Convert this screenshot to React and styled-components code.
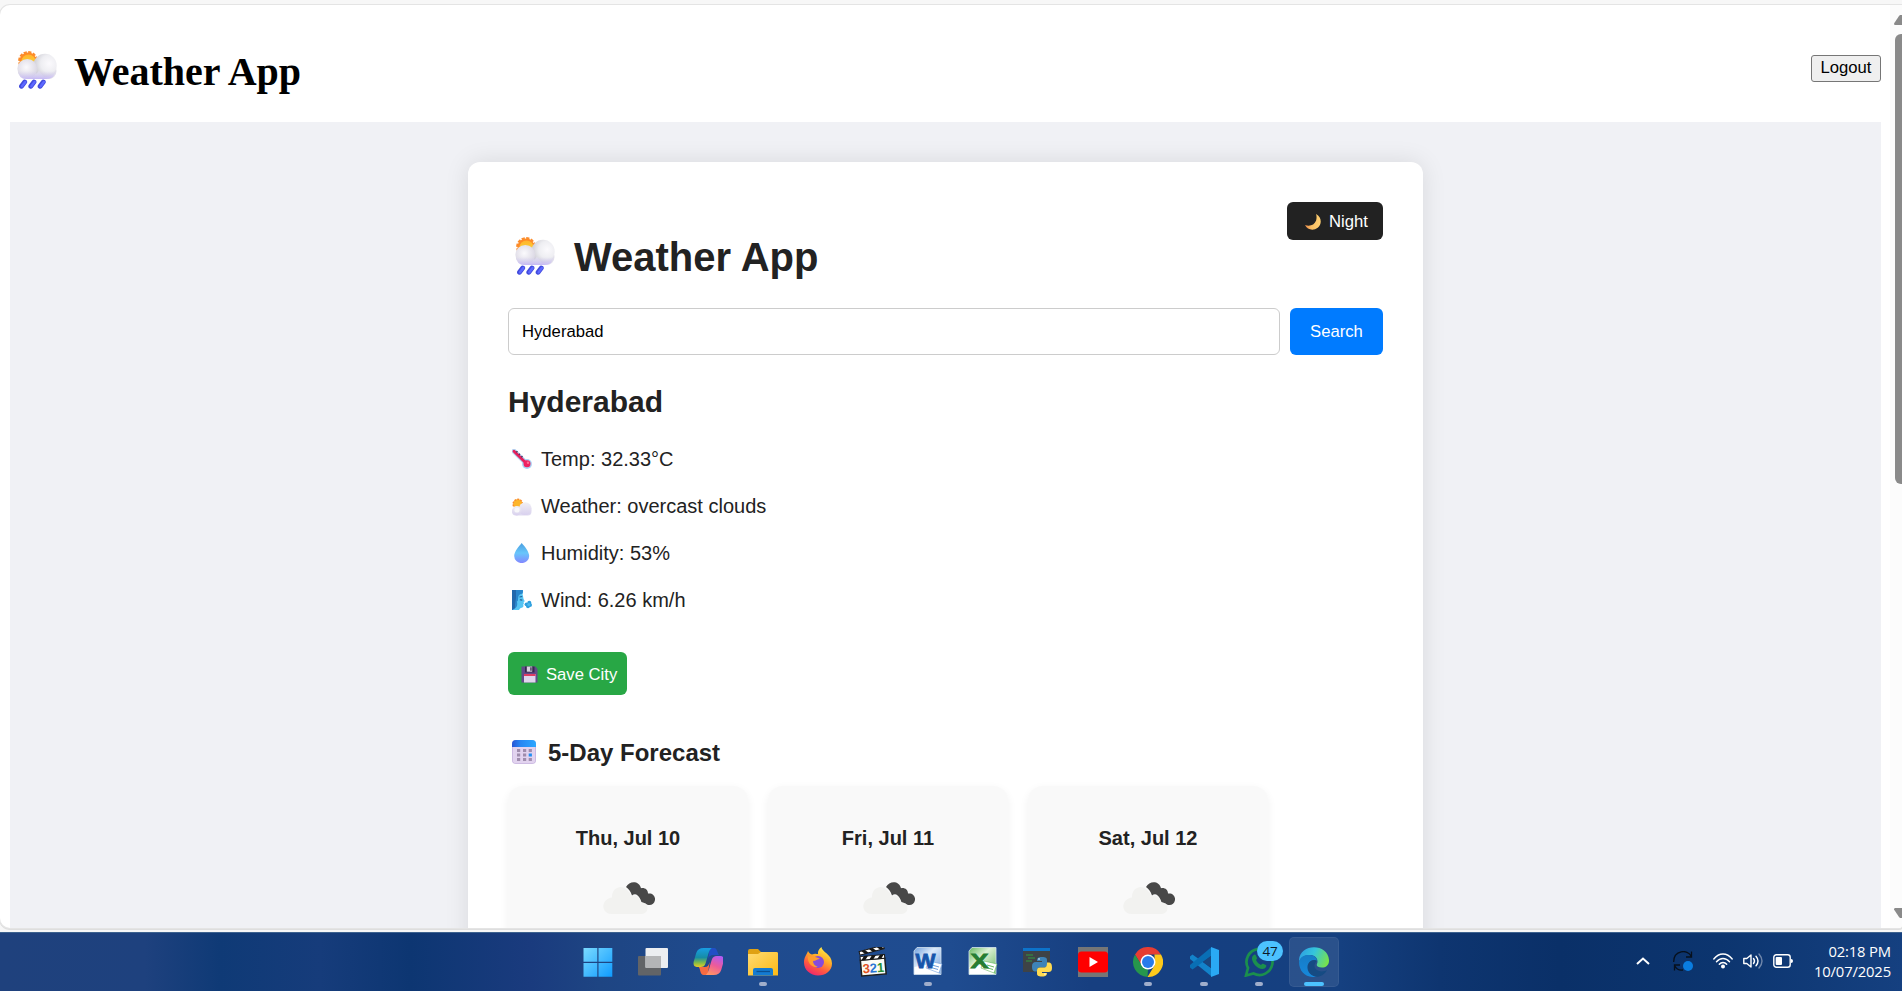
import React from "react";
import styled, { createGlobalStyle } from "styled-components";

const Global = createGlobalStyle`
  *, *::before, *::after { box-sizing: border-box; }
  html, body { margin: 0; padding: 0; overflow: hidden; background: #f7f7f7; }
  button, input { margin: 0; }
  svg { display: block; flex: none; }
`;
const sans = `"Liberation Sans", Arial, sans-serif`;

const Desktop = styled.div`
  width: 1902px; height: 991px; display: flex; flex-direction: column;
  padding-top: 5px; overflow: hidden; background: #f7f7f7;
`;
const BrowserWindow = styled.div`
  display: flex; height: 923px; flex: none; overflow: hidden; background: #fff;
  border-radius: 10px 0 3px 10px;
  box-shadow: 0 0 0 1px #e4e4e4, 0 1px 0 1px #dedede;
`;
const Page = styled.main`flex: 1; padding: 10px 9px 0 10px; overflow: hidden;`;
const Nav = styled.header`
  height: 107px; display: flex; align-items: center; justify-content: space-between;
`;
const Brand = styled.div`
  display: flex; align-items: center; gap: 17px; padding-left: 7px; padding-top: 3px;
`;
const BrandTitle = styled.h1`
  margin: 4px 0 0; font: bold 40px/46px "Liberation Serif", "Times New Roman", serif; color: #000;
`;
const Logout = styled.button`
  width: 70px; height: 27px; padding: 0 0 2px; border: 1px solid #767676; border-radius: 3px;
  background: #efefef; color: #000; font: 16.67px/19px ${sans};
`;
const Backdrop = styled.div`
  height: 900px; display: flex; justify-content: center; align-items: flex-start;
  padding-top: 40px; background: #f0f1f5; overflow: hidden;
`;
const Card = styled.section`
  width: 955px; height: 1200px; flex: none; padding: 40px; background: #fff; border-radius: 12px;
  box-shadow: 0 0 25px rgba(0, 0, 0, 0.1); color: #222; font-family: ${sans};
`;
const CardHead = styled.div`
  display: flex; justify-content: space-between; align-items: flex-start; height: 106px;
`;
const CardBrand = styled.div`
  display: flex; align-items: flex-start; gap: 19px; padding: 32px 0 0 7px;
  svg { margin-top: 3px; }
`;
const CardTitle = styled.h1`margin: 0; font-size: 40px; line-height: 46px;`;
const NightButton = styled.button`
  display: flex; align-items: center; gap: 8px; width: 96px; height: 38px; padding: 2px 0 0 18px;
  border: 0; border-radius: 6px; background: #222; color: #fff; font: 16.67px/20px ${sans};
`;
const SearchRow = styled.div`display: flex; gap: 10px; height: 47px;`;
const SearchInput = styled.input`
  flex: 1; border: 1px solid #ccc; border-radius: 6px; padding: 0 13px; background: #fff;
  color: #000; outline: 0; font: 16.67px/20px ${sans};
`;
const SearchButton = styled.button`
  width: 93px; border: 0; border-radius: 6px; background: #007bff; color: #fff; font: 16.67px/20px ${sans};
`;
const City = styled.h2`margin: 30px 0 17px; font-size: 30px; line-height: 34px;`;
const Reading = styled.div`
  display: flex; align-items: center; height: 47px; gap: 9px; padding: 0 0 1px 4px;
  font-size: 20px; line-height: 46px;
`;
const SaveButton = styled.button`
  display: flex; align-items: center; gap: 8px; margin-top: 28px; width: 119px; height: 43px;
  padding: 2px 0 0 13px; border: 0; border-radius: 6px; background: #28a745; color: #fff;
  font: 16.67px/20px ${sans}; white-space: nowrap;
`;
const ForecastTitle = styled.h3`
  display: flex; align-items: center; gap: 12px; margin: 44px 0 19px; padding-left: 4px;
  font-size: 24px; line-height: 28px;
  svg { margin-bottom: 2px; }
`;
const Days = styled.div`display: flex; gap: 20px;`;
const Day = styled.article`
  width: 240px; height: 300px; padding-top: 40px; display: flex; flex-direction: column;
  align-items: center; gap: 32px; border-radius: 15px; background: #f9f9f9;
  box-shadow: 0 3px 10px rgba(0, 0, 0, 0.06);
  svg { margin-left: 2px; }
`;
const DayName = styled.strong`font-size: 20px; line-height: 24px;`;

const Scrollbar = styled.div`
  width: 12px; height: 923px; background: #fcfcfc; display: flex; flex-direction: column;
  align-items: flex-start; padding: 10px 0 10px 4px; overflow: hidden;
`;
const Thumb = styled.div`
  width: 12px; height: 450px; margin: 9px 0 auto 1px; border-radius: 6px; background: #8a8a8a; flex: none;
`;

const Taskbar = styled.footer`
  margin-top: 4px; height: 59px; display: flex; align-items: stretch; border-top: 1px solid #3d628f;
  background: linear-gradient(90deg, #1f417d 0, #1e417e 145px, #0f3a76 220px, #163c7b 320px,
    #0d3672 410px, #1a3b7e 530px, #1e4583 600px, #1f4b8e 720px, #1f4c90 950px, #173f80 1090px,
    #153f80 1200px, #154080 1340px, #0e3570 1440px, #0a3068 1560px, #0c356f 1720px, #154080 1902px);
`;
const Apps = styled.div`display: flex; padding-left: 570px; flex: none;`;
const Slot = styled.div`
  position: relative; width: 55.1px; display: flex; flex-direction: column; align-items: center;
  padding-top: 14px;
`;
const Glyph = styled.div`position: relative;`;
const ActiveTile = styled.div`
  position: absolute; left: 2.5px; top: 4px; width: 50px; height: 50px; border-radius: 5px;
  background: rgba(255, 255, 255, 0.09); border: 1px solid rgba(255, 255, 255, 0.06);
`;
const Running = styled.span`
  width: ${(p) => (p.$active ? 20 : 8)}px; height: 4px; margin-top: 5px; border-radius: 2px;
  background: ${(p) => (p.$active ? "#4cc2ff" : "#a0aecb")}; position: relative;
`;
const Badge = styled.span`
  position: absolute; left: 26px; top: 8px; width: 26px; height: 20px; border-radius: 10px;
  background: #4cc2ff; color: #0b1a2a; text-align: center;
  font: 13.5px/20px "Open Sans", "Noto Sans", sans-serif;
`;
const Tray = styled.div`
  flex: 1; display: flex; align-items: center; justify-content: flex-end; padding: 0 11px 3px 0;
`;
const TrayIcon = styled.span`margin-right: ${(p) => p.$gap}px;`;
const Clock = styled.div`
  width: 78px; padding-top: 1px; text-align: right; color: #fff; white-space: nowrap;
  font: 14.8px/20px "Open Sans", "Noto Sans", sans-serif; letter-spacing: -0.15px;
`;

const RainCloud = ({ id }) => (
  <svg width="40" height="38" viewBox="0 0 40 38">
    <defs>
      <radialGradient id={id + "a"} cx=".68" cy=".42" r=".72"><stop offset="0" stopColor="#fbfafd" /><stop offset=".5" stopColor="#eeeef2" /><stop offset="1" stopColor="#c9c8d0" /></radialGradient>
      <radialGradient id={id + "b"} cx=".45" cy=".42" r=".6"><stop offset="0" stopColor="#fbfafd" /><stop offset="1" stopColor="#d9d6e2" /></radialGradient>
      <linearGradient id={id + "c"} x1="0" y1="0" x2="0" y2="1"><stop offset=".2" stopColor="#d5cff0" stopOpacity="0" /><stop offset="1" stopColor="#c6b9f5" /></linearGradient>
      <linearGradient id={id + "s"} x1="0" y1="0" x2="0" y2="1"><stop offset="0" stopColor="#ffb42d" /><stop offset=".7" stopColor="#fbd236" /></linearGradient>
    </defs>
    <circle cx="11" cy="10" r="8.5" fill="#ff8a24" />
    <circle cx="11" cy="10" r="8.800" fill="none" stroke="#fb8c2c" strokeWidth="2.200" strokeDasharray="3.200 1.400" strokeLinejoin="round" />
    <circle cx="11.500" cy="10.500" r="7" fill={`url(#${id}s)`} />
    <rect x="1" y="12" width="38.500" height="16" rx="8" fill="#e3e1eb" />
    <circle cx="28" cy="14.500" r="11.700" fill={`url(#${id}a)`} />
    <circle cx="10.300" cy="17.800" r="9.900" fill={`url(#${id}b)`} />
    <path d="M10 27.500q8-1 12-8l6 8Z" fill="#e0deea" />
    <path d="M.6 18H39.400q-1.400 10-10.400 10H10Q1 28 .6 18Z" fill={`url(#${id}c)`} />
    <g stroke="#424bdc" strokeWidth="4.800" strokeLinecap="round"><path d="M7.700 31 4.500 35.300M17 31l-3.200 4.300M26.300 31l-3.200 4.300" /></g>
    <g stroke="#5d68ff" strokeWidth="2.400" strokeLinecap="round"><path d="M8.300 31 5 35.200M17.600 31l-3.300 4.200M26.900 31l-3.300 4.200" /></g>
  </svg>
);
const Moon = () => (
  <svg width="16" height="16" viewBox="0 0 16 16"><defs><linearGradient id="moon" x1="1" x2="0"><stop stopColor="#ffd071" /><stop offset=".6" stopColor="#f8bd62" /><stop offset="1" stopColor="#ee8b4a" /></linearGradient></defs>
    <path d="M11 0C17 3 17 10.500 12.700 13.800 8.200 17.200 2.200 15.800 0 11c5 1.800 9.400-.2 11-4.300C11.800 4.300 11.700 2 11 0Z" fill="url(#moon)" /></svg>
);
const Thermometer = () => (
  <svg width="20" height="20" viewBox="0 0 20 20"><path d="M2 2.200 15 15" stroke="#b4d5f3" strokeWidth="5" strokeLinecap="round" /><circle cx="15" cy="15" r="4.900" fill="#a9d1f4" /><path d="M2 2.200 15 15" stroke="#e4205c" strokeWidth="2.800" strokeLinecap="round" /><circle cx="15" cy="14.800" r="3.500" fill="#ee2262" /><circle cx="16" cy="13.700" r="1.200" fill="#ff6e95" /><path d="m4.300 3.300 1.200-1.100M6.800 5.800 8 4.700M9.300 8.200l1.200-1.100" stroke="#4e3569" strokeWidth="1.500" /></svg>
);
const CloudSun = () => (
  <svg width="20" height="20" viewBox="0 0 20 20"><defs><linearGradient id="cs" x1="0" x2="0" y1="0" y2="1"><stop stopColor="#f1f0f4" /><stop offset="1" stopColor="#d8d0ee" /></linearGradient></defs>
    <circle cx="5.800" cy="8" r="4.700" fill="#fdb62b" stroke="#fa8b2b" strokeWidth="1.400" strokeDasharray="2 1" /><rect x="0" y="12" width="19.500" height="7.500" rx="3.700" fill="#dfdaf0" /><circle cx="13.300" cy="12.700" r="6.400" fill="url(#cs)" /><circle cx="4.800" cy="14.700" r="4.700" fill="url(#cs)" /><circle cx="5" cy="14" r="2.600" fill="#f8f7fa" /></svg>
);
const Drop = () => (
  <svg width="20" height="20" viewBox="0 0 20 20"><defs><linearGradient id="drop" x1="0" x2="0" y1="0" y2="1"><stop stopColor="#4a9fe0" /><stop offset=".5" stopColor="#68c6fb" /><stop offset="1" stopColor="#8387ff" /></linearGradient></defs><path d="M9.700 0C12 2.700 17.200 8.400 17.200 13a7.400 7 0 0 1-15 0C2.200 8.400 7.500 2.700 9.700 0Z" fill="url(#drop)" /></svg>
);
const WindFace = () => (
  <svg width="20" height="20" viewBox="0 0 20 20"><path d="M0 0h10.500c1 1.500.5 3 0 4.300.7 1.700.6 3.500 1.300 5.200l1 1.800-1.300.7.5 1.200-.8 1.200.3 1.800c-.8 2-2.500 1.300-3.500 2.300L7 20H0Z" fill="#55c4f3" /><path d="M0 0h10.800c.5 1.200 0 2.800-.6 3.800C8 4 6.500 5 6.300 7l-.5 4-1 .5C6 15 5 18.500 0 20Z" fill="#2a86cc" /><path d="M0 0h4v8L3 14v4l-3 2Z" fill="#2268ac" /><path d="m7.800 9.800 2.500.3M7.500 7l2.700-.5" stroke="#235c92" strokeWidth="1.100" /><g fill="#2e9fde"><circle cx="14.500" cy="14.300" r="1.900" /><circle cx="17.300" cy="12.700" r="2" /><circle cx="18" cy="15" r="2" /><circle cx="16" cy="16.300" r="1.900" /></g><circle cx="16.800" cy="14.500" r="1.500" fill="#4eb8ec" /></svg>
);
const Floppy = () => (
  <svg width="17" height="17" viewBox="0 0 17 17"><path d="M.5.5h14L16.500 3v13.500H.5Z" fill="#624a89" /><path d="M4 .5h9.500v6H4Z" fill="#36284d" /><path d="M5.800.5h5.400v5.200H5.800Z" fill="#d8d3df" /><path d="M9.300 1.200h1.300v3.600H9.300Z" fill="#38284a" /><path d="M3 8h11.500v8.500H3Z" fill="#e0d5ed" /><path d="M3 8h11.500v2H3Z" fill="#df3c63" /></svg>
);
const Calendar = () => (
  <svg width="24" height="24" viewBox="0 0 24 24"><defs><linearGradient id="cal"><stop stopColor="#2855d4" /><stop offset=".35" stopColor="#2686f3" /><stop offset="1" stopColor="#2ca7ff" /></linearGradient></defs><rect width="24" height="24" rx="4" fill="#c7b4df" /><rect x=".8" y="3" width="22.400" height="20.200" rx="3" fill="#e2d3ef" /><path d="M0 7V4a4 4 0 0 1 4-4h16a4 4 0 0 1 4 4v3Z" fill="url(#cal)" />
    {[5, 11, 16.7].map((x) => [9, 13.5, 18].map((y) => <rect key={x + "-" + y} x={x} y={y} width="3.200" height="3" fill={x > 16 && y === 13.5 ? "#218ff2" : "#9f8dad"} />))}</svg>
);
const BrokenClouds = () => (
  <svg width="52" height="32" viewBox="0 0 52 32"><path d="M23 5C26.500-1.500 36-1.500 38 6.200c3.800-.8 7 1.500 7 5.300 4.500-.8 7.500 2.500 7 6.500-.8 5-6 6.500-9.500 3.500-3.500 1-4.200-1.500-5-4C34.500 11.500 31.500 11.500 29 13.500 27.500 9 25.500 7 23 5Z" fill="#484848" /><path d="M8.500 32C-2 32-3 17.500 9 15.500 8.500 5 20 1.500 25 9c2 1.500 2.800 3.500 2.800 5.500 5.200-2 9.200.5 9.700 5.500 5 .3 7 3 7 6 0 4-3 6-7 6Z" fill="#f2f2f0" /></svg>
);

const I = ({ children }) => <svg width="30" height="30" viewBox="0 0 30 30">{children}</svg>;
const WinLogo = () => <I><defs><linearGradient id="win" gradientUnits="userSpaceOnUse" x1="0" y1="0" x2="29" y2="29"><stop stopColor="#7ddcff" /><stop offset="1" stopColor="#119cff" /></linearGradient></defs><path fill="url(#win)" d="M.5 1H14.300v13.800H.5ZM15.500 1H29.300v13.800H15.500ZM.5 16H14.300v13.800H.5ZM15.500 16H29.300v13.800H15.500Z" /></I>;
const TaskView = () => <I><rect y="9" width="23" height="19.500" rx="1" fill="#626467" /><rect x="7.500" y="1" width="22.500" height="20" rx="1" fill="#eceef1" /><path d="M7.500 9H23v12H8.500a1 1 0 0 1-1-1Z" fill="#b4b5b7" /></I>;
const Copilot = () => <I><defs><linearGradient id="cp1" x1="0" x2="0" y1="0" y2="1"><stop stopColor="#189ee5" /><stop offset=".5" stopColor="#168da5" /><stop offset=".78" stopColor="#83bc47" /><stop offset="1" stopColor="#e7cc24" /></linearGradient><linearGradient id="cp2" x1=".7" y1="0" x2=".3" y2="1"><stop stopColor="#b25bf1" /><stop offset=".5" stopColor="#ed5b99" /><stop offset="1" stopColor="#ff9465" /></linearGradient></defs>
  <g transform="translate(.7 0)"><path d="M16 1h4.500c3 0 3 5 5 7h-6c-3 0-4 1-5 4Z" fill="#204fc6" /><path d="M14 28H10c-4 0-3-6-5-8h6c3 0 4-2 5-5Z" fill="#f66b42" /><path d="M10 1h8c-3 2-4 9-6 15-1 3-2.500 4-5 4H3c-3 0-4-3-2.500-7l2-7C3.700 2.500 6 1 10 1Z" fill="url(#cp1)" /><path d="M20 28h-8c3-2 4-9 6-15 1-3 2.500-4 5-4h4c3 0 4 3 2.500 7l-2 7c-1.200 3.500-3.500 5-7.500 5Z" fill="url(#cp2)" /></g></I>;
const Folder = () => <I><defs><linearGradient id="fo" x1="0" y1="0" x2="1" y2="1"><stop stopColor="#ffdb73" /><stop offset="1" stopColor="#fbb915" /></linearGradient></defs><path d="M0 10V4q0-2 2-2h8l3 3h15q2 0 2 2v3Z" fill="#dfa113" /><path d="M0 7h10l3-2h15.500Q30 5 30 6.500V28.500H0Z" fill="url(#fo)" /><path d="M5 28.500V23q0-2 2-2h16q2 0 2 2v5.500Z" fill="#147bd1" /><path d="M8.500 24.500H22" stroke="#0b4f91" strokeWidth="1.300" /></I>;
const Firefox = () => <I><defs><linearGradient id="ff" x1=".8" y1="0" x2=".3" y2="1"><stop stopColor="#fff34d" /><stop offset=".4" stopColor="#ffad28" /><stop offset=".7" stopColor="#ff5b40" /><stop offset="1" stopColor="#ed256e" /></linearGradient></defs><path d="M5 4c1 2 2 3 4 3.500C12 6 14 7 15 7c-.5-3 1-5 3.500-7 0 5 10.500 7 10.500 16.500C29 24 22.500 28.500 15 28.500S1 23 1 15.500C1 10 3.500 8 5 4Z" fill="url(#ff)" /><circle cx="15" cy="15" r="6" fill="#854bdc" /><path d="M5 9c3 1 8 0 12 3-3 0-4 2-7 2 0 3 2 5 5 6-6 1-11-4-10-11Z" fill="#ff9d2e" /></I>;
const Clapper = () => <I><g transform="rotate(-5 15 20)"><rect x="3" y="12" width="24.500" height="16" fill="#fbfbf5" stroke="#1d1d1d" strokeWidth="1.500" /><rect x="3" y="8.500" width="24.500" height="3.800" fill="#fff" stroke="#181818" /><path d="m4 12.300 3-4h4l-3 4Zm8 0 3-4h4l-3 4Zm8 0 3-4h4l-3 4Z" fill="#151515" /></g><g transform="rotate(-15 2 8)"><rect x="2" y="4.500" width="25" height="3.600" fill="#fff" stroke="#181818" /><path d="m4 4.500 3 3.600h4L8 4.500Zm8 0 3 3.600h4l-3-3.600Zm8 0 3 3.600h4l-3-3.600Z" fill="#151515" /></g><text fontFamily="Liberation Sans, sans-serif" fontWeight="bold" fontSize="13" y="25.500" x="4.500" textLength="21.500" transform="rotate(-4 15 20)"><tspan fill="#e15222">3</tspan><tspan fill="#2774d4">2</tspan><tspan fill="#279038">1</tspan></text></I>;
const Office = ({ letter, color, bg, pale }) => <I><defs><linearGradient id={"of" + letter} x1="0" y1="0" x2="1" y2="1"><stop stopColor={bg} /><stop offset=".4" stopColor={pale} /><stop offset="1" stopColor={bg} /></linearGradient></defs><path d="M4 .5h24V27.500H1V4Z" fill={`url(#of${letter})`} stroke="#d6e3ef" strokeWidth=".8" /><path d="M1.500 20 17 17l10 10H1.500Z" fill="#fff" /><path d="m16 14 13 3-3 9-13-5Z" fill="#fff" stroke={bg} strokeWidth=".6" /><path d="m19 18 7 2m-8 .5 7 2" stroke={bg} strokeWidth="1" /><text x="2.500" y="20.500" fontFamily="Liberation Sans, sans-serif" fontWeight="bold" fontSize="21" textLength={letter === "W" ? 20 : 18} lengthAdjust="spacingAndGlyphs" fill={color} stroke={color} strokeWidth=".8">{letter}</text></I>;
const Python = () => <I><path d="M0 1h27v24H0Z" fill="#3e4347" /><path d="M0 1h27v3H0Z" fill="#0c73cb" /><path d="M3 8h7M5 11h7M3 14h6" stroke="#319a43" strokeWidth="1.200" /><path d="M19 10c4 0 5 1 5 3v5c0 2-1 2.500-3 2.500h-4c-2 0-3 1-3 4-4 .5-5-1.500-5-5 0-3 1-4.500 4-4.500h6v-1h-5c0-3 1-4 5-4Z" fill="#3d83b8" /><path d="M19 29.500c-4 0-5-1-5-3V23.500c0-2 1-3 3-3h4c2 0 3-1 3-5 4-.5 5 1.500 5 5s-1 4.500-4 4.500h-6v1h5c0 2-1 3.500-5 3.500Z" fill="#ffda50" /><circle cx="16" cy="12" r=".8" fill="#fff" /><circle cx="22" cy="27" r=".8" fill="#fff" /></I>;
const YouTube = () => <I><path fill="#767676" d="M0 0h30v30H0Z" /><rect y="4.500" width="30" height="21" rx="3.500" fill="#ff0000" /><path d="m11.500 10 8.500 5-8.500 5Z" fill="#fff" /></I>;
const Chrome = () => <I><path d="M2 7.500A15 15 0 0 1 28 7.500H15L8.500 18Z" fill="#e63d32" /><path d="M2 7.500 8.500 18 15 22.500 14.500 30A15 15 0 0 1 2 7.500Z" fill="#26964c" /><path d="M28 7.500A15 15 0 0 1 14.500 30l7-11.500V7.500Z" fill="#fdc91b" /><circle cx="15" cy="15" r="7.500" fill="#fff" /><circle cx="15" cy="15" r="6" fill="#287bea" /></I>;
const Code = () => <I><path d="M1 9.500 3.500 7.500 22 21v8L1 12Z" fill="#1383ca" /><path d="M1 20.500 3.500 22.500 22 9V.5L1 18Z" fill="#096fb5" /><path d="m22 0 8 3v24l-8 3V0Z" fill="#2aa9f4" /><path d="m22 9-8 6 8 6Z" fill="#1a477f" /></I>;
const WhatsApp = () => <I><path d="M2 28.500 4 21A13 13 0 1 1 9.500 26.500Z" fill="none" stroke="#1b8f4d" strokeWidth="2.700" /><path d="M9.500 8.200c1-1 2-.7 2.500.5l1 2.300c.2.700-.5 1.500-1 2 1 2.300 2.700 4 5 5 1-1 1.500-1.500 2.200-1.200l2.600 1.300c1.200.7 0 3-1.300 3.500-5.500 2.300-13-5.600-12.500-10.600.1-1.100.7-2.100 1.500-2.800Z" fill="#1b8f4d" /></I>;
const Edge = () => <I><defs><linearGradient id="ed1" x1="0" x2="1" y1=".3" y2=".6"><stop stopColor="#2d9fe3" /><stop offset=".45" stopColor="#35c5dc" /><stop offset="1" stopColor="#78e34a" /></linearGradient><linearGradient id="ed2" x1="0" y1="0" x2="0" y2="1"><stop stopColor="#167cc6" /><stop offset="1" stopColor="#1688dc" /></linearGradient></defs><path d="M0 13C1-4 29-4 30 13c.3 5-3 7.500-7 7.500-4 0-6-1.500-5-3.500 2-5-2-9-7-9-6 0-10 3-11 7Z" fill="url(#ed1)" /><path d="M0 15C1 9 7 7.500 11 8c4 0 7 3 7 6-4-2-9 0-9 6 0 5 4 9 9 9.500C8 32 0 25 0 15Z" fill="url(#ed2)" /><path d="M18 13.500c-5-2-10 2-9.500 7.500.5 6 6 9.500 11.500 8.500 4-1 7-4 8-6.500-5 3-12 1-12.500-4-.1-2 1-3.500 2.500-5.500Z" fill="#164b83" /></I>;

const apps = [
  { n: "start", icon: <WinLogo /> }, { n: "tasks", icon: <TaskView /> }, { n: "copilot", icon: <Copilot /> },
  { n: "files", icon: <Folder />, run: true }, { n: "firefox", icon: <Firefox /> }, { n: "player", icon: <Clapper /> },
  { n: "word", icon: <Office letter="W" color="#1755aa" bg="#6f9edb" pale="#dceafa" />, run: true },
  { n: "excel", icon: <Office letter="X" color="#277d32" bg="#66b95e" pale="#dcf0d6" /> },
  { n: "python", icon: <Python /> }, { n: "youtube", icon: <YouTube /> }, { n: "chrome", icon: <Chrome />, run: true },
  { n: "code", icon: <Code />, run: true }, { n: "whatsapp", icon: <WhatsApp />, run: true, badge: "47" },
  { n: "edge", icon: <Edge />, run: true, active: true },
];
const readings = [
  [<Thermometer />, "Temp: 32.33°C"], [<CloudSun />, "Weather: overcast clouds"],
  [<Drop />, "Humidity: 53%"], [<WindFace />, "Wind: 6.26 km/h"],
];

export default function App() {
  return (
    <Desktop>
      <Global />
      <BrowserWindow>
        <Page>
          <Nav>
            <Brand><RainCloud id="nav" /><BrandTitle>Weather App</BrandTitle></Brand>
            <Logout>Logout</Logout>
          </Nav>
          <Backdrop>
            <Card>
              <CardHead>
                <CardBrand><RainCloud id="card" /><CardTitle>Weather App</CardTitle></CardBrand>
                <NightButton><Moon />Night</NightButton>
              </CardHead>
              <SearchRow>
                <SearchInput defaultValue="Hyderabad" />
                <SearchButton>Search</SearchButton>
              </SearchRow>
              <City>Hyderabad</City>
              {readings.map(([icon, text]) => <Reading key={text}>{icon}<span>{text}</span></Reading>)}
              <SaveButton><Floppy />Save City</SaveButton>
              <ForecastTitle><Calendar />5-Day Forecast</ForecastTitle>
              <Days>
                {["Thu, Jul 10", "Fri, Jul 11", "Sat, Jul 12"].map((d) => (
                  <Day key={d}><DayName>{d}</DayName><BrokenClouds /></Day>
                ))}
              </Days>
            </Card>
          </Backdrop>
        </Page>
        <Scrollbar>
          <svg width="14" height="10" viewBox="0 0 14 10"><path d="M6 0h2l6 8q0 2-2 2H1Q0 10 0 8.500L5 1Z" fill="#8a8a8a" /></svg>
          <Thumb />
          <svg width="14" height="10" viewBox="0 0 14 10"><path d="M6 10h2l6-8q0-2-2-2H1Q0 0 0 1.500L5 9Z" fill="#8a8a8a" /></svg>
        </Scrollbar>
      </BrowserWindow>
      <Taskbar>
        <Apps>
          {apps.map((a) => (
            <Slot key={a.n}>
              {a.active && <ActiveTile />}
              <Glyph>{a.icon}</Glyph>
              {a.run && <Running $active={a.active} />}
              {a.badge && <Badge>{a.badge}</Badge>}
            </Slot>
          ))}
        </Apps>
        <Tray>
          <TrayIcon $gap={23}><svg width="14" height="8" viewBox="0 0 14 8"><path d="m1 7 6-5.500L13 7" fill="none" stroke="#fff" strokeWidth="2" /></svg></TrayIcon>
          <TrayIcon $gap={20}><svg width="20" height="20" viewBox="0 0 20 20"><path d="M.7 11C.5-1 15-2 18 5M18.500.5V6H13M1.500 19.500V14H7M1.500 14.500c2 4 5.500 5 8.500 4.500" fill="none" stroke="#07101c" strokeWidth="1.300" /><circle cx="15" cy="15" r="5" fill="#0a7de0" /></svg></TrayIcon>
          <TrayIcon $gap={10}><svg width="20" height="16" viewBox="0 0 20 16"><g fill="none" stroke="#fff" strokeWidth="1.400" strokeLinecap="round"><path d="M.8 6C6-.7 14-.7 19.200 6M3.500 8.800c3.700-4.500 9.300-4.500 13 0M6.300 11.300c2-2.500 5.400-2.500 7.400 0" /></g><circle cx="10" cy="13.500" r="2" fill="#fff" /></svg></TrayIcon>
          <TrayIcon $gap={10}><svg width="20" height="18" viewBox="0 0 20 18"><g fill="none" stroke="#fff" strokeWidth="1.400" strokeLinecap="round" strokeLinejoin="round"><path d="M.8 6.500h3L8 3v12l-4.200-3.500h-3ZM10.500 6.500q2 2.500 0 5M13 4.200q4 4.800 0 9.600" /><path d="M16 2q6 7 0 14" stroke="#6f86aa" /></g></svg></TrayIcon>
          <TrayIcon $gap={20}><svg width="20" height="14" viewBox="0 0 20 14"><rect x=".8" y=".8" width="16.400" height="12.400" rx="2.500" fill="none" stroke="#fff" strokeWidth="1.400" /><rect x="2.700" y="2.900" width="6.300" height="8.200" rx="1" fill="#fff" /><path d="M18 5q2 0 2 2t-2 2Z" fill="#fff" /></svg></TrayIcon>
          <Clock><div>02:18 PM</div><div>10/07/2025</div></Clock>
        </Tray>
      </Taskbar>
    </Desktop>
  );
}
